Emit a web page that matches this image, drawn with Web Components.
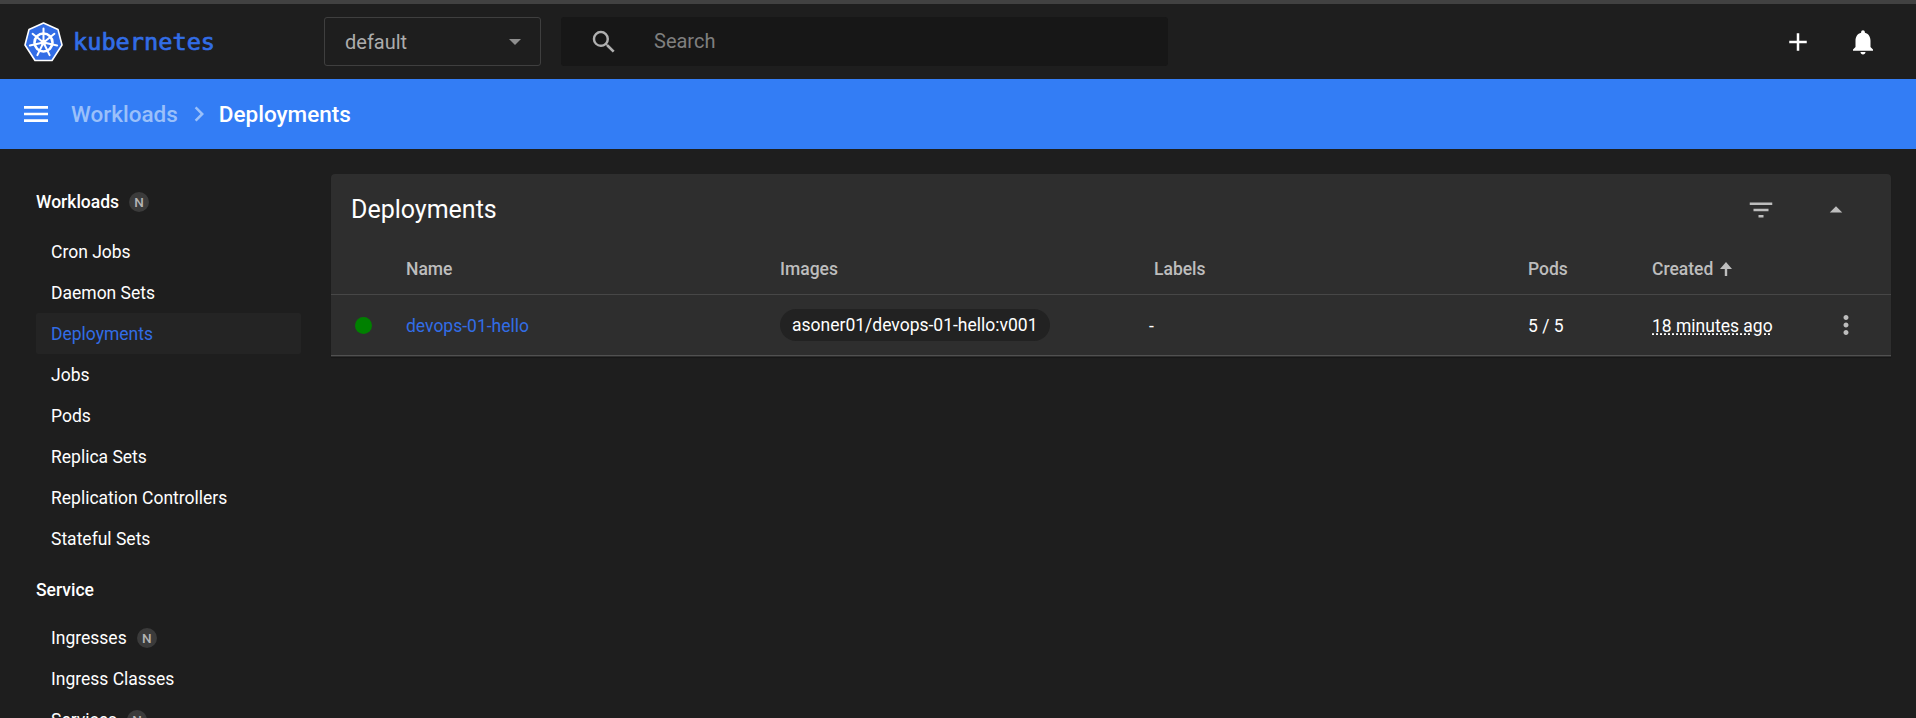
<!DOCTYPE html>
<html lang="en">
<head>
<meta charset="utf-8">
<title>Deployments - Kubernetes Dashboard</title>
<style>
  html, body { margin: 0; height: 100%; overflow: hidden; background: #1e1e1e; }
  body { font-family: Roboto, "Liberation Sans", sans-serif; color: #fff; }
</style>
</head>
<body>
<kd-app></kd-app>

<script>
/**
 * Defines an element whose shadow root is cloned from the given markup.
 *
 * @param {string} name Tag name.
 * @param {string} html Markup and styles of the shadow root.
 */
function defineSimple (name, html) {
  const template = document.createElement('template')
  template.innerHTML = html
  customElements.define(name, class extends HTMLElement {
    constructor () {
      super()
      this.attachShadow({ mode: 'open' }).appendChild(template.content.cloneNode(true))
    }
  })
}

// Small "N" namespace badge.
defineSimple('kd-badge', `
  <style>
    :host {
      display: inline-flex;
      width: 20px;
      height: 20px;
      margin-left: 10px;
      border-radius: 50%;
      align-items: center;
      justify-content: center;
      background: #3b3b3b;
      color: #b4b4b4;
      font-size: 13.5px;
      font-weight: 500;
    }
  </style>
  <slot></slot>
`)

// Top bar with logo, namespace select, search and actions.
defineSimple('kd-toolbar', `
  <style>
    :host {
      display: flex;
      height: 75px;
      align-items: center;
      border-top: 4px solid #414141;
      background: #1e1e1e;
    }
    .logo { display: flex; align-items: center; width: 324px; padding-left: 24px; box-sizing: border-box; }
    .logo span {
      margin-left: 10px;
      color: #326de6;
      font: 400 23.6px "DejaVu Sans Mono", "Liberation Mono", monospace;
      -webkit-text-stroke: 0.7px #326de6;
    }
    .select {
      display: flex;
      box-sizing: border-box;
      width: 217px;
      height: 49px;
      padding: 0 19px 0 20px;
      align-items: center;
      justify-content: space-between;
      border: 1px solid #3f3f3f;
      border-radius: 3px;
      color: #acacac;
      font-size: 20px;
    }
    .select i { border: 6px solid transparent; border-top-color: #8e8e8e; border-bottom: 0; }
    .search {
      display: flex;
      box-sizing: border-box;
      width: 607px;
      height: 49px;
      margin-left: 20px;
      padding-left: 28px;
      align-items: center;
      border-radius: 3px;
      background: #171717;
      color: #7f7f7f;
      font-size: 20px;
    }
    .search span { margin-left: 35px; padding-bottom: 2px; }
    .actions { display: flex; margin-left: auto; padding-right: 38px; gap: 35px; }
    svg { display: block; }
  </style>
  <div class="logo">
    <svg width="39" height="40" viewBox="0 0 39 40">
      <polygon points="19.5,1 34,7.5 38,23 28,38.5 11,38.5 1,23 5,7.5" fill="#326de6" stroke="#fff" stroke-width="1.6" stroke-linejoin="round"/>
      <circle cx="19.5" cy="20.5" r="9" fill="none" stroke="#fff" stroke-width="2.6"/>
      <path d="M19.5 20.5V6.5M19.5 20.5L30.4 11.8M19.5 20.5L33.15 23.6M19.5 20.5L25.6 33.1M19.5 20.5L13.4 33.1M19.5 20.5L5.85 23.6M19.5 20.5L8.6 11.8" fill="none" stroke="#fff" stroke-width="2" stroke-linecap="round"/>
      <circle cx="19.5" cy="20.5" r="2.8" fill="#fff"/>
    </svg>
    <span>kubernetes</span>
  </div>
  <div class="select"><span>default</span><i></i></div>
  <div class="search">
    <svg width="30" height="30" viewBox="0 0 24 24" fill="#b0b0b0"><path d="M15.5 14h-.79l-.28-.27A6.47 6.47 0 0 0 16 9.5 6.5 6.5 0 1 0 9.5 16c1.61 0 3.09-.59 4.23-1.57l.27.28v.79l5 4.99L20.49 19l-4.99-5zm-6 0C7.01 14 5 11.99 5 9.5S7.01 5 9.5 5 14 7.01 14 9.5 11.99 14 9.5 14z"/></svg>
    <span>Search</span>
  </div>
  <div class="actions">
    <svg width="30" height="30" viewBox="0 0 24 24" fill="#fff"><path d="M19 13h-6v6h-2v-6H5v-2h6V5h2v6h6v2z"/></svg>
    <svg width="30" height="30" viewBox="0 0 24 24" fill="#fff"><path d="M12 22c1.1 0 2-.9 2-2h-4c0 1.1.89 2 2 2zm6-6v-5c0-3.07-1.64-5.64-4.5-6.32V4c0-.83-.67-1.5-1.5-1.5s-1.5.67-1.5 1.5v.68C7.63 5.36 6 7.92 6 11v5l-2 2v1h16v-1l-2-2z"/></svg>
  </div>
`)

// Blue bar with menu button and breadcrumbs.
defineSimple('kd-breadcrumbs', `
  <style>
    :host {
      display: flex;
      height: 70px;
      padding-left: 20px;
      align-items: center;
      background: #337df5;
      font-size: 22.5px;
      font-weight: 500;
    }
    svg { display: block; flex: none; }
    .parent { margin-left: 19px; color: #9ac0fa; }
    .sep { margin: 0 5px 0 6px; }
  </style>
  <svg width="32" height="32" viewBox="0 0 24 24" fill="#fff"><path d="M3 18h18v-2H3v2zm0-5h18v-2H3v2zm0-7v2h18V6H3z"/></svg>
  <span class="parent">Workloads</span>
  <svg class="sep" width="30" height="30" viewBox="0 0 24 24" fill="#9ac0fa"><path d="M10 6L8.59 7.41 13.17 12l-4.58 4.59L10 18l6-6z"/></svg>
  <span>Deployments</span>
`)

// Sidebar section title.
defineSimple('kd-nav-group', `
  <style>
    :host {
      display: flex;
      height: 41px;
      margin-top: 12px;
      padding-left: 36px;
      align-items: center;
      font-size: 17.5px;
      font-weight: 500;
    }
  </style>
  <slot></slot>
`)

// Sidebar link, highlighted when it has the active attribute.
defineSimple('kd-nav-item', `
  <style>
    :host {
      display: flex;
      box-sizing: border-box;
      width: 265px;
      height: 41.14px;
      margin-left: 36px;
      padding-left: 15px;
      align-items: center;
      border-radius: 2px;
      font-size: 17.5px;
    }
    :host([active]) { background: #242424; color: #326de6; }
  </style>
  <slot></slot>
`)

defineSimple('kd-sidebar', `
  <style>
    :host { display: block; flex: none; width: 331px; padding-top: 20px; box-sizing: border-box; }
    .items { display: block; margin-top: 9px; }
    .items + kd-nav-group { margin-top: 9px; }
  </style>
  <kd-nav-group>Workloads<kd-badge>N</kd-badge></kd-nav-group>
  <div class="items">
    <kd-nav-item>Cron Jobs</kd-nav-item>
    <kd-nav-item>Daemon Sets</kd-nav-item>
    <kd-nav-item active>Deployments</kd-nav-item>
    <kd-nav-item>Jobs</kd-nav-item>
    <kd-nav-item>Pods</kd-nav-item>
    <kd-nav-item>Replica Sets</kd-nav-item>
    <kd-nav-item>Replication Controllers</kd-nav-item>
    <kd-nav-item>Stateful Sets</kd-nav-item>
  </div>
  <kd-nav-group>Service</kd-nav-group>
  <div class="items" style="margin-top: 7px">
    <kd-nav-item>Ingresses<kd-badge>N</kd-badge></kd-nav-item>
    <kd-nav-item>Ingress Classes</kd-nav-item>
    <kd-nav-item>Services<kd-badge>N</kd-badge></kd-nav-item>
  </div>
`)

// Card holding the deployments table.
defineSimple('kd-card', `
  <style>
    :host {
      display: block;
      flex: none;
      box-sizing: border-box;
      width: 1560px;
      height: 183px;
      margin-top: 25px;
      border-radius: 4px 4px 0 0;
      background: #2e2e2e;
      box-shadow: 0 1px 1px rgba(0, 0, 0, 0.25);
    }
    .head { display: flex; height: 70px; padding: 1px 0 0 20px; align-items: center; box-sizing: border-box; font-size: 25px; font-weight: 400; }
    .head .tools { display: flex; margin-left: auto; gap: 45px; padding-right: 40px; }
    svg { display: block; flex: none; }
    .grid { display: grid; grid-template-columns: 75px 374px 374px 374px 124px 1fr 60px; }
    .row { display: contents; }
    .row > div { display: flex; align-items: center; box-sizing: border-box; font-size: 17.5px; }
    .row.heading > div { height: 51px; border-bottom: 1px solid #474747; color: #bdbdbd; font-weight: 500; }
    .body > div { height: 61px; border-bottom: 1px solid #515151; }
    .body > .t { padding-top: 1px; }
    .dot { width: 17px; height: 17px; margin-left: 9px; border-radius: 50%; background: #008000; }
    .status { padding-left: 15px; }
    a { color: #326de6; text-decoration: none; }
    .chip { display: flex; height: 32px; padding: 0 12px; align-items: center; border-radius: 16px; background: #222; }
    .dash { margin-left: -5px; }
    abbr { text-decoration: underline dotted; text-underline-offset: 2px; }
  </style>
  <div class="head">
    <span>Deployments</span>
    <div class="tools">
      <svg width="30" height="30" viewBox="0 0 24 24" fill="#bdbdbd"><path d="M10 18h4v-2h-4v2zM3 6v2h18V6H3zm3 7h12v-2H6v2z"/></svg>
      <svg width="30" height="30" viewBox="0 0 24 24" fill="#bdbdbd"><path d="M7 14l5-5 5 5z"/></svg>
    </div>
  </div>
  <div class="grid">
    <div class="row heading">
      <div></div><div>Name</div><div>Images</div><div>Labels</div><div>Pods</div>
      <div>Created<svg width="16" height="18" viewBox="0 0 16 18" fill="#bdbdbd" style="margin-left:5px"><path d="M8 2L2 9h4.8v7h2.4V9H14z"/></svg></div>
      <div></div>
    </div>
    <div class="row body">
      <div class="status"><span class="dot"></span></div>
      <div class="t"><a href="#">devops-01-hello</a></div>
      <div><span class="chip">asoner01/devops-01-hello:v001</span></div>
      <div class="t"><span class="dash">-</span></div>
      <div class="t">5 / 5</div>
      <div class="t"><abbr>18 minutes ago</abbr></div>
      <div><svg width="30" height="30" viewBox="0 0 24 24" fill="#bdbdbd"><path d="M12 8c1.1 0 2-.9 2-2s-.9-2-2-2-2 .9-2 2 .9 2 2 2zm0 2c-1.1 0-2 .9-2 2s.9 2 2 2 2-.9 2-2-.9-2-2-2zm0 6c-1.1 0-2 .9-2 2s.9 2 2 2 2-.9 2-2-.9-2-2-2z"/></svg></div>
    </div>
  </div>
`)

// Page shell.
defineSimple('kd-app', `
  <style>
    :host { display: flex; flex-direction: column; height: 718px; overflow: hidden; }
    main { display: flex; flex: 1; min-height: 0; align-items: flex-start; }
  </style>
  <kd-toolbar></kd-toolbar>
  <kd-breadcrumbs></kd-breadcrumbs>
  <main>
    <kd-sidebar></kd-sidebar>
    <kd-card></kd-card>
  </main>
`)
</script>
</body>
</html>
